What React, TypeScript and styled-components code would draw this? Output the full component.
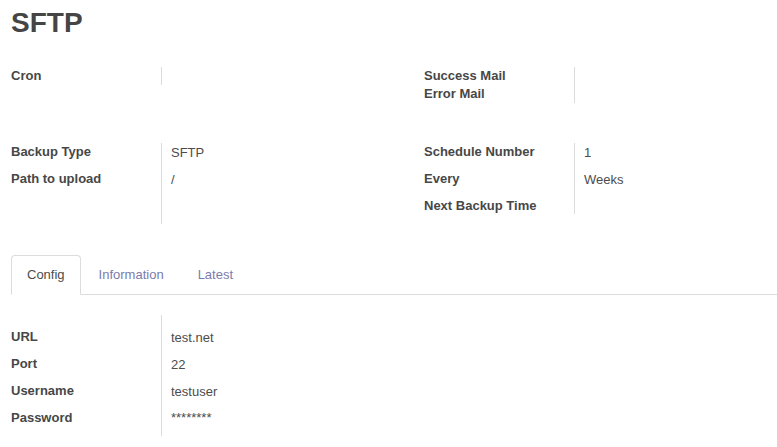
import React from "react";
import styled, { createGlobalStyle } from "styled-components";

const Global = createGlobalStyle`
  html, body { margin: 0; padding: 0; background: #fff; }
  body { font-family: "Liberation Sans", Arial, sans-serif; font-size: 13px; color: #4c4c4c; }
`;

const Page = styled.div`
  padding: 6px 0 0 11px;
`;

const Title = styled.h1`
  margin: 0;
  font-size: 28px;
  line-height: 34px;
  font-weight: bold;
  color: #454545;
`;

const Groups = styled.div<{ $top: number }>`
  display: grid;
  grid-template-columns: 413px 1fr;
  align-items: start;
  margin-top: ${(p) => p.$top}px;
`;

const Group = styled.div`
  display: grid;
  grid-template-columns: 150px 1fr;
`;

const Label = styled.div<{ $h: number }>`
  height: ${(p) => p.$h}px;
  line-height: 18px;
  font-weight: bold;
  color: #474747;
`;

const Value = styled.div<{ $h: number }>`
  height: ${(p) => p.$h}px;
  box-sizing: border-box;
  border-left: 1px solid #dcdcdc;
  padding: 1px 0 0 9px;
  line-height: 17px;
  color: #4c4c4c;
`;

const Secret = styled.span`
  font-size: 13px;
  position: relative;
  top: -1px;
`;

const Nav = styled.div`
  display: flex;
  margin-top: 31px;
  border-bottom: 1px solid #dcdcdc;
`;

const Tab = styled.div<{ $active?: boolean }>`
  margin: 0 2px -1px 0;
  padding: 10px 15px;
  line-height: 18px;
  border: 1px solid ${(p) => (p.$active ? "#dcdcdc" : "transparent")};
  border-bottom-color: ${(p) => (p.$active ? "#fff" : "transparent")};
  border-radius: 4px 4px 0 0;
  background: ${(p) => (p.$active ? "#fff" : "transparent")};
  color: ${(p) => (p.$active ? "#4c4c4c" : "#7c7bad")};
`;

type Row = { label: string; value?: React.ReactNode; h: number };

const FieldGroup = ({ rows }: { rows: Row[] }) => (
  <Group>
    {rows.map((r, i) => (
      <React.Fragment key={i}>
        <Label $h={r.h}>{r.label}</Label>
        <Value $h={r.h}>{r.value}</Value>
      </React.Fragment>
    ))}
  </Group>
);

export default function App() {
  return (
    <>
      <Global />
      <Page>
        <Title>SFTP</Title>
        <Groups $top={27}>
          <FieldGroup rows={[{ label: "Cron", h: 18 }]} />
          <FieldGroup
            rows={[
              { label: "Success Mail", h: 18 },
              { label: "Error Mail", h: 18 },
            ]}
          />
        </Groups>
        <Groups $top={40}>
          <FieldGroup
            rows={[
              { label: "Backup Type", value: "SFTP", h: 27 },
              { label: "Path to upload", value: "/", h: 27 },
              { label: "", h: 27 },
            ]}
          />
          <FieldGroup
            rows={[
              { label: "Schedule Number", value: "1", h: 27 },
              { label: "Every", value: "Weeks", h: 27 },
              { label: "Next Backup Time", h: 17 },
            ]}
          />
        </Groups>
        <Nav>
          <Tab $active>Config</Tab>
          <Tab>Information</Tab>
          <Tab>Latest</Tab>
        </Nav>
        <Groups $top={20}>
          <FieldGroup
            rows={[
              { label: "", h: 13 },
              { label: "URL", value: "test.net", h: 27 },
              { label: "Port", value: "22", h: 27 },
              { label: "Username", value: "testuser", h: 27 },
              { label: "Password", value: <Secret>********</Secret>, h: 27 },
            ]}
          />
        </Groups>
      </Page>
    </>
  );
}
